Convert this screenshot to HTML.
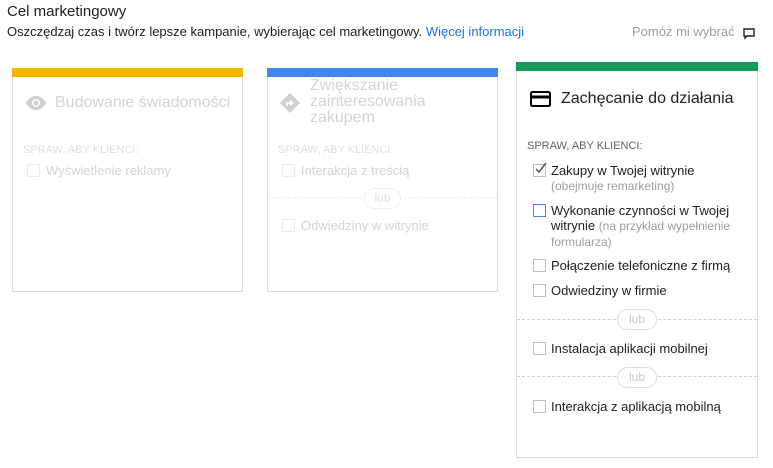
<!DOCTYPE html>
<html><head><meta charset="utf-8"><style>
*{margin:0;padding:0;box-sizing:border-box}
body{width:773px;height:468px;background:#fff;font-family:"Liberation Sans",Arial,sans-serif;position:relative;overflow:hidden;color:#202124}
.a{position:absolute;white-space:nowrap}
.card{position:absolute;border:1px solid #dadce0;background:#fff}
.cb{position:absolute;width:13px;height:13px;border:1px solid #bdbdbd;background:#fff}
.dash{position:absolute;border-top:1px dashed #d0d0d0;height:0}
.lub{position:absolute;height:21px;border:1px solid #ddd;border-radius:11px;background:#fff;font-size:12px;color:#c8c8c8;text-align:center;line-height:19px}
.t13{font-size:13px;line-height:16px}
</style></head><body>
<div class="a" style="left:7px;top:2px;font-size:15px;line-height:20px">Cel marketingowy</div>
<div class="a t13" style="left:7px;top:24px">Oszczędzaj czas i twórz lepsze kampanie, wybierając cel marketingowy. <span style="color:#1a73e8">Więcej informacji</span></div>
<div class="a t13" style="left:632px;top:24px;color:#9aa0a6">Pomóż mi wybrać</div>
<svg class="a" style="left:743px;top:28px" width="12" height="12" viewBox="0 0 12 12"><path d="M1 1H11V8H4L2 10V8H1Z" fill="none" stroke="#202124" stroke-width="1.4"/></svg>

<div class="card" style="left:12px;top:68px;width:231px;height:224px;border-top:none">
<div style="height:9px;background:#f4b400;margin:0 -1px"></div></div>
<svg class="a" style="left:25px;top:95px" width="22" height="16" viewBox="0 0 22 16"><path d="M11 1C6 1 2 5 1 8c1 3 5 7 10 7s9-4 10-7C20 5 16 1 11 1z" fill="#cfcfcf"/><circle cx="11" cy="8" r="4" fill="#fff"/><circle cx="11" cy="8" r="2.4" fill="#cfcfcf"/></svg>
<div class="a" style="left:55px;top:94px;font-size:16px;color:#d4d4d4">Budowanie świadomości</div>
<div class="a" style="left:23px;top:144px;font-size:11px;color:#e0e0e0">SPRAW, ABY KLIENCI:</div>
<div class="cb" style="left:27px;top:164px;border-color:#ececec"></div>
<div class="a t13" style="left:46px;top:163px;color:#d4d4d4">Wyświetlenie reklamy</div>

<div class="card" style="left:267px;top:68px;width:231px;height:224px;border-top:none">
<div style="height:9px;background:#4285f4;margin:0 -1px"></div></div>
<svg class="a" style="left:280px;top:93px" width="20" height="20" viewBox="0 0 20 20"><path d="M10 0L20 10 10 20 0 10Z" fill="#d0d0d0"/><path d="M7 13V10h5M10 7.5l2.5 2.5-2.5 2.5" fill="none" stroke="#fff" stroke-width="1.8"/></svg>
<div class="a" style="left:310px;top:78px;font-size:16px;line-height:16px;color:#d4d4d4">Zwiększanie<br>zainteresowania<br>zakupem</div>
<div class="a" style="left:278px;top:144px;font-size:11px;color:#e0e0e0">SPRAW, ABY KLIENCI:</div>
<div class="cb" style="left:282px;top:164px;border-color:#ececec"></div>
<div class="a t13" style="left:301px;top:163px;color:#d4d4d4">Interakcja z treścią</div>
<div class="dash" style="left:268px;top:197px;width:229px;border-color:#ececec"></div>
<div class="lub" style="left:364px;top:188px;width:37px;border-color:#f0f0f0;color:#e0e0e0">lub</div>
<div class="cb" style="left:282px;top:219px;border-color:#ececec"></div>
<div class="a t13" style="left:301px;top:218px;color:#d4d4d4">Odwiedziny w witrynie</div>

<div class="card" style="left:516px;top:62px;width:242px;height:396px;border-top:none">
<div style="height:9px;background:#0f9d58;margin:0 -1px"></div></div>
<svg class="a" style="left:530px;top:91px" width="21" height="16" viewBox="0 0 21 16"><rect x="1" y="1" width="19" height="14" rx="1.5" fill="none" stroke="#000" stroke-width="2"/><rect x="1" y="4.5" width="19" height="3" fill="#000"/></svg>
<div class="a" style="left:561px;top:89px;font-size:16px;line-height:20px;color:#202124">Zachęcanie do działania</div>
<div class="a" style="left:527px;top:140px;font-size:11px;color:#5f6368">SPRAW, ABY KLIENCI:</div>
<div class="cb" style="left:533px;top:164px;border-color:#bdbdbd"></div>
<svg class="a" style="left:533px;top:161px" width="15" height="14" viewBox="0 0 15 14"><path d="M3 8l3 3 7-9" fill="none" stroke="#555" stroke-width="1.5"/></svg>
<div class="a t13" style="left:551px;top:163px">Zakupy w Twojej witrynie</div>
<div class="a" style="left:551px;top:179px;font-size:12px;color:#9e9e9e">(obejmuje remarketing)</div>
<div class="cb" style="left:533px;top:204px;border-color:#4285f4"></div>
<div class="a t13" style="left:551px;top:203px;line-height:15px">Wykonanie czynności w Twojej<br>witrynie <span style="font-size:12px;color:#9e9e9e">(na przykład wypełnienie</span><br><span style="font-size:12px;color:#9e9e9e">formularza)</span></div>
<div class="cb" style="left:533px;top:259px"></div>
<div class="a t13" style="left:551px;top:258px">Połączenie telefoniczne z firmą</div>
<div class="cb" style="left:533px;top:284px"></div>
<div class="a t13" style="left:551px;top:283px">Odwiedziny w firmie</div>
<div class="dash" style="left:517px;top:319px;width:240px"></div>
<div class="lub" style="left:617px;top:309px;width:40px">lub</div>
<div class="cb" style="left:533px;top:342px"></div>
<div class="a t13" style="left:551px;top:341px">Instalacja aplikacji mobilnej</div>
<div class="dash" style="left:517px;top:376px;width:240px"></div>
<div class="lub" style="left:617px;top:367px;width:40px">lub</div>
<div class="cb" style="left:533px;top:400px"></div>
<div class="a t13" style="left:551px;top:399px">Interakcja z aplikacją mobilną</div>
</body></html>
